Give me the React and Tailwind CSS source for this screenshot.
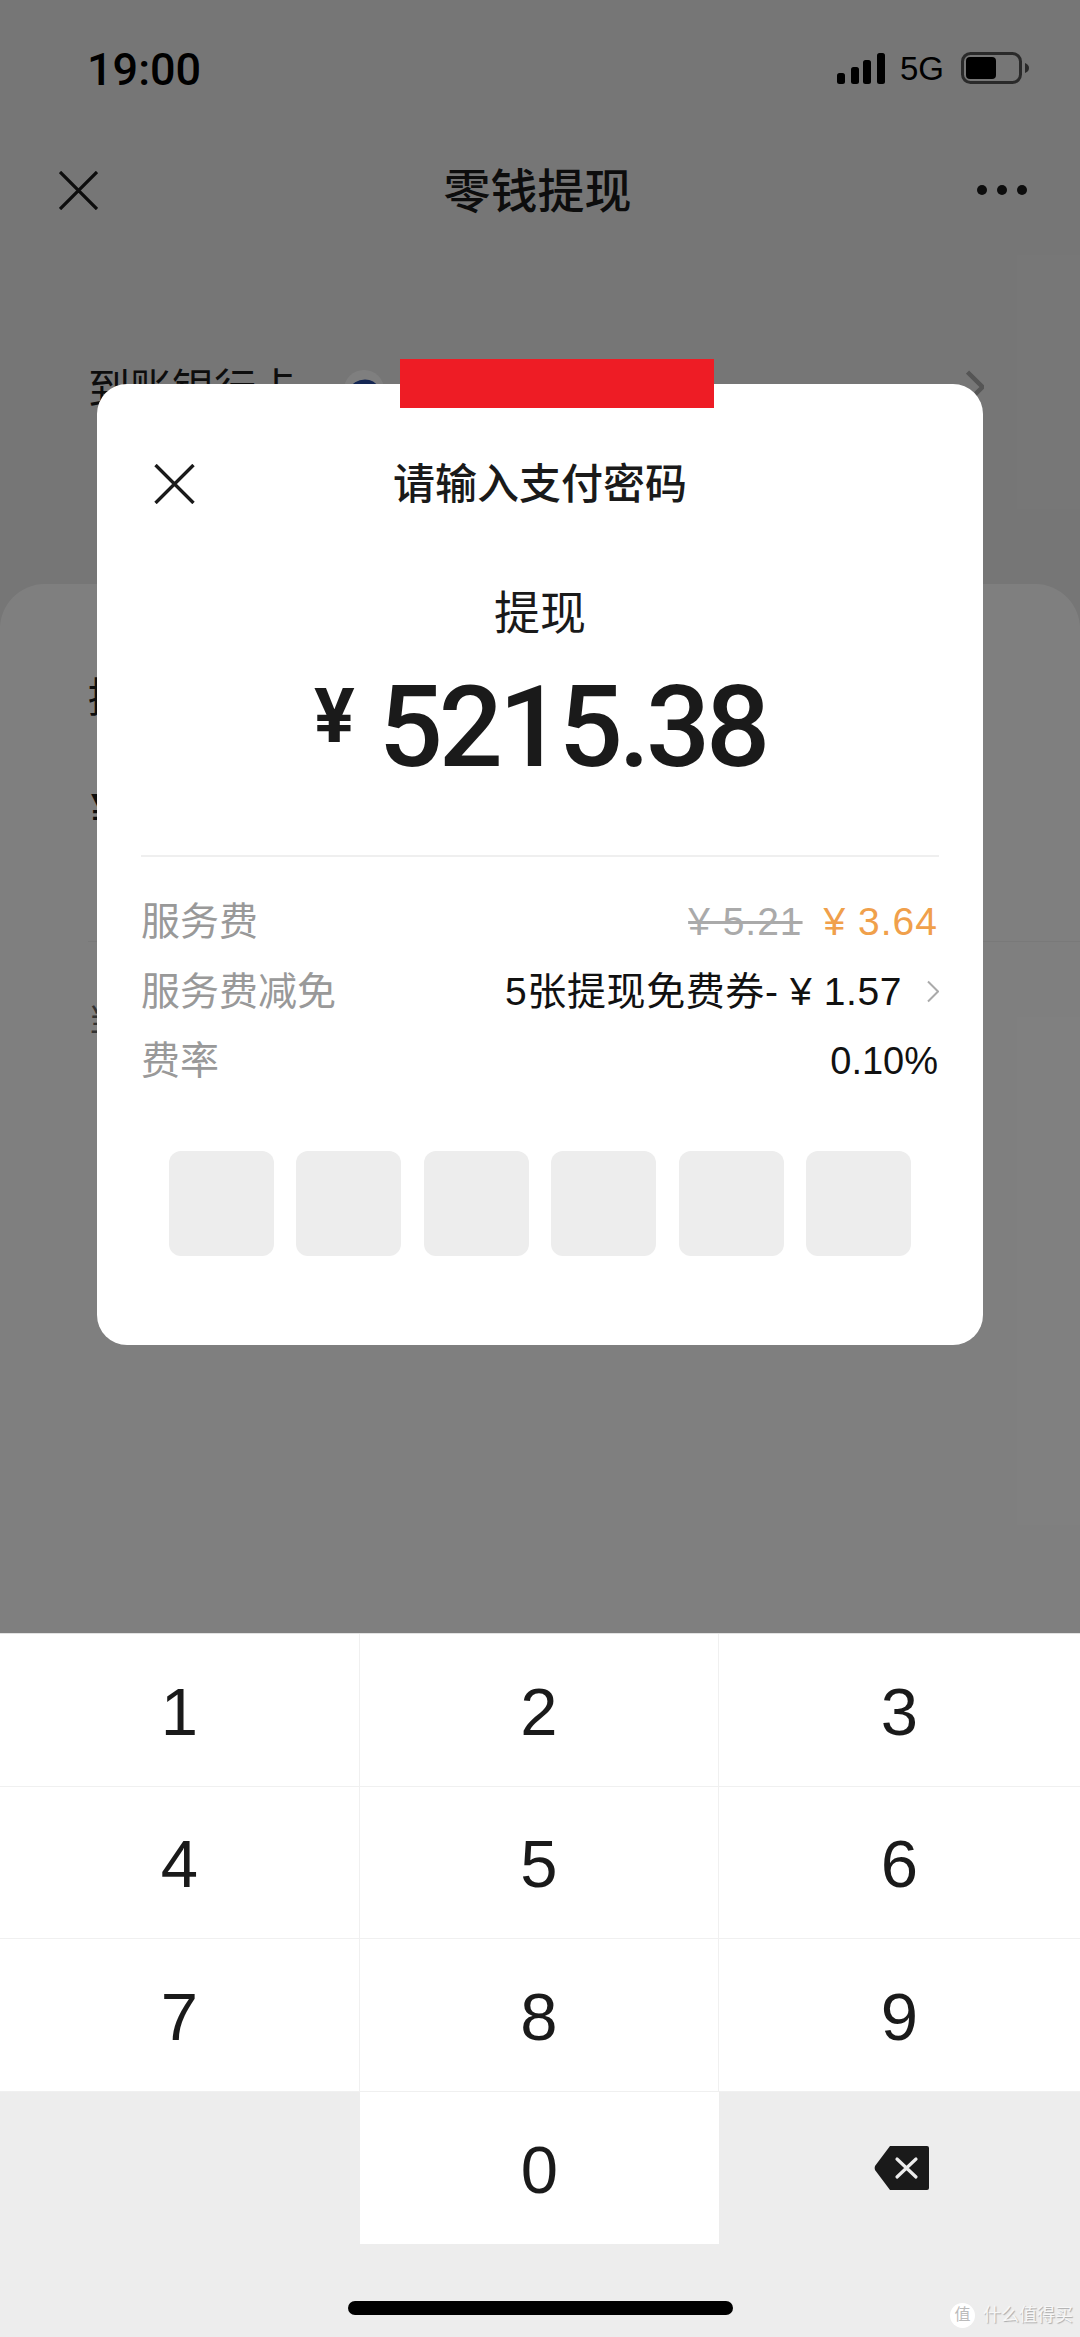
import React from "react";

const FONT = "font-['Liberation_Sans','Noto_Sans_CJK_SC',sans-serif]";

const CloseIcon = ({ className }) => (
  <svg viewBox="0 0 40 40" className={className} fill="none" stroke="currentColor" strokeWidth="3.4">
    <path d="M1 1l38 38M39 1L1 39" />
  </svg>
);

const Chevron = ({ className, strokeWidth = 2 }) => (
  <svg viewBox="0 0 12 22" className={className} fill="none" stroke="currentColor" strokeWidth={strokeWidth}>
    <path d="M1 1l10 10L1 21" />
  </svg>
);

const StatusBar = () => (
  <div className="h-[136px] pl-[87px] pr-[51px] flex items-center justify-between">
    <span className="text-[45px] font-medium leading-none text-black font-['Roboto',sans-serif] mt-[2px]">19:00</span>
    <div className="flex items-center">
      <svg viewBox="0 0 48 31" className="w-[48px] h-[31px] text-black" fill="currentColor">
        <rect x="0" y="20" width="8" height="11" rx="2.5" />
        <rect x="14" y="14" width="8" height="17" rx="2.5" />
        <rect x="26" y="7" width="8" height="24" rx="2.5" />
        <rect x="40" y="0" width="8" height="31" rx="2.5" />
      </svg>
      <span className="ml-[15px] text-[33px] leading-none text-black">5G</span>
      <svg viewBox="0 0 68 32" className="ml-[17px] w-[68px] h-[32px]">
        <rect x="1.5" y="1.5" width="58" height="29" rx="8" fill="none" stroke="#555" strokeWidth="3" />
        <rect x="5" y="5" width="30" height="22" rx="4" fill="#000" />
        <path d="M64 11c3 1 4 3 4 5s-1 4-4 5z" fill="#555" />
      </svg>
    </div>
  </div>
);

const BankLogo = () => (
  <span className="ml-[46px] w-[40px] h-[40px] rounded-full bg-white flex items-center justify-center">
    <svg viewBox="0 0 40 40" className="w-[40px] h-[40px]" fill="none" stroke="#2a4fa8">
      <path d="M7 22c2-7 8-10 14-10s9 2 12 7" strokeWidth="5" />
      <path d="M13 26c1-4 4-6 8-6s6 1 8 4" strokeWidth="3" />
    </svg>
  </span>
);

const Backdrop = () => (
  <div className="h-[1633px] bg-[#ededed] flex flex-col overflow-hidden">
    <StatusBar />
    <div className="h-[108px] pl-[59px] pr-[53px] flex items-center justify-between text-[#1a1a1a]">
      <CloseIcon className="w-[39px] h-[39px]" />
      <span className="text-[47px] font-medium leading-none mt-[2px]">零钱提现</span>
      <div className="flex gap-[10px]">
        <span className="w-[10px] h-[10px] rounded-full bg-[#1a1a1a]" />
        <span className="w-[10px] h-[10px] rounded-full bg-[#1a1a1a]" />
        <span className="w-[10px] h-[10px] rounded-full bg-[#1a1a1a]" />
      </div>
    </div>
    <div className="h-[340px] pt-[122px] pl-[88px] pr-[96px] flex items-start justify-between">
      <div className="flex items-center">
        <span className="text-[42px] leading-[48px] text-[#1a1a1a]">到账银行卡</span>
        <BankLogo />
      </div>
      <Chevron className="w-[18px] h-[34px] text-[#aaa] mt-[4px]" strokeWidth="3" />
    </div>
    <div className="flex-1 bg-white rounded-t-[45px] pl-[88px] pt-[90px] flex flex-col text-[#1a1a1a]">
      <span className="text-[41px] leading-[48px]">提现金额</span>
      <span className="mt-[64px] pl-[3px] text-[44px] leading-[48px] font-bold">¥</span>
      <div className="mt-[107px] h-px bg-[#f2f2f2]" />
      <span className="mt-[54px] text-[32px] leading-[48px] text-[#666]">当前零钱余额</span>
    </div>
  </div>
);

const feeLabel = "text-[39px] leading-[50px] text-[#999]";

const Dialog = () => (
  <div className="relative w-[886px] h-[961px] bg-white rounded-[30px] pt-[81px] px-[44px] flex flex-col">
    {/* red block covers the card number */}
    <div className="absolute left-[303px] -top-[25px] w-[314px] h-[49px] bg-[#ee1c25]" />
    <div className="relative h-[40px] flex items-center justify-center">
      <CloseIcon className="absolute left-[13px] -top-[1px] w-[41px] h-[40px] text-[#1a1a1a]" />
      <span className="text-[42px] font-medium leading-none text-[#1a1a1a]">请输入支付密码</span>
    </div>
    <div className="mt-[80px] text-center text-[46px] leading-[56px] text-[#1a1a1a]">提现</div>
    <div className="mt-[21px] h-[130px] flex items-center justify-center text-[#1a1a1a] font-['Roboto',sans-serif]">
      <span className="text-[76px] font-bold leading-none mb-[22px] mr-[24px]">¥</span>
      <span className="text-[113px] font-medium leading-none tracking-[-4.2px]">5215.38</span>
    </div>
    <div className="mt-[63px] h-[2px] bg-[#efefef]" />
    <div className="mt-[40px] flex flex-col gap-[19.5px]">
      <div className="flex items-center justify-between">
        <span className={feeLabel}>服务费</span>
        <div className="flex items-center text-[39px] leading-[50px] tracking-[1px] pr-[1px]">
          <span className="line-through text-[#aaa]">¥ 5.21</span>
          <span className="ml-[21px] text-[#f0a04b]">¥ 3.64</span>
        </div>
      </div>
      <div className="flex items-center justify-between">
        <span className={feeLabel}>服务费减免</span>
        <div className="flex items-center text-[39px] leading-[50px] text-[#111]">
          <span className="tracking-[0.6px]">5张提现免费券- ¥ 1.57</span>
          <Chevron className="ml-[25px] w-[12px] h-[23px] text-[#aaa]" />
        </div>
      </div>
      <div className="flex items-center justify-between">
        <span className={feeLabel}>费率</span>
        <span className="text-[38px] leading-[50px] text-[#111] pr-[1px]">0.10%</span>
      </div>
    </div>
    <div className="mt-[65px] mx-[28px] flex justify-between">
      {[0, 1, 2, 3, 4, 5].map((i) => (
        <div key={i} className="w-[105px] h-[105px] rounded-[12px] bg-[#ededed]" />
      ))}
    </div>
  </div>
);

const Key = ({ n, last }) => (
  <div className={`h-[152.5px] pt-[3px] flex items-center justify-center bg-white text-[67px] leading-none text-[#1a1a1a] border-[#f0f0f0] border-b ${last ? "" : "border-r"}`}>
    {n}
  </div>
);

const Keyboard = () => (
  <div className="h-[704px] bg-[#ededed] border-t border-[#e2e2e2] flex flex-col">
    <div className="grid grid-cols-[360px_359px_361px]">
      {[1, 2, 3, 4, 5, 6, 7, 8, 9].map((n) => (
        <Key key={n} n={n} last={n % 3 === 0} />
      ))}
      <div />
      <div className="h-[152px] pt-[3px] flex items-center justify-center bg-white text-[67px] leading-none text-[#1a1a1a]">0</div>
      <div className="h-[152px] pl-[4px] flex items-center justify-center">
        <svg viewBox="0 0 55 44" className="w-[55px] h-[44px]">
          <path d="M16 0h37a2 2 0 0 1 2 2v40a2 2 0 0 1-2 2H16L1 24a6 6 0 0 1 0-4z" fill="#1a1a1a" />
          <path d="M23 13l19 18M42 13L23 31" stroke="#ededed" strokeWidth="3.2" strokeLinecap="round" />
        </svg>
      </div>
    </div>
    <div className="relative flex-1">
      <div className="absolute left-[348px] top-[57px] w-[385px] h-[14px] rounded-full bg-black" />
      {/* site watermark */}
      <div className="absolute left-[950px] top-[59px] flex items-center">
        <span className="w-[25px] h-[25px] rounded-full bg-white text-[#bbb] text-[16px] leading-none flex items-center justify-center">值</span>
        <span className="ml-[8px] text-[18px] leading-none text-[#f7f7f7] [text-shadow:1px_1px_1px_#aaa] whitespace-nowrap">什么值得买</span>
      </div>
    </div>
  </div>
);

export default function App() {
  return (
    <div className={`relative w-[1080px] h-[2337px] overflow-hidden flex flex-col ${FONT}`}>
      <Backdrop />
      <div className="absolute left-0 top-0 w-full h-[1633px] bg-black/50 flex justify-center pt-[384px]">
        <Dialog />
      </div>
      <Keyboard />
    </div>
  );
}
